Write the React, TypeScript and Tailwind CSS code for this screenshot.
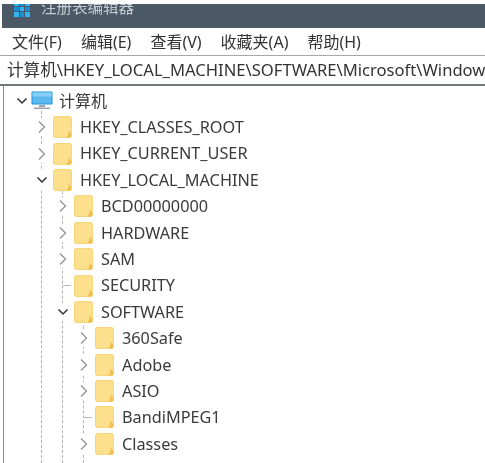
import React from "react";

const font = { fontFamily: '"Noto Sans", "Noto Sans CJK SC", sans-serif' };

function Chevron({ open }: { open?: boolean }) {
  return open ? (
    <svg width="12" height="10" viewBox="0 0 12 10" fill="none" stroke="#2f3336" strokeWidth="1.5">
      <path d="M1.5 2.5 6 7l4.5-4.5" />
    </svg>
  ) : (
    <svg width="8" height="14" viewBox="0 0 8 14" fill="none" stroke="#8f9499" strokeWidth="1.3">
      <path d="M1 1.5 6.5 7 1 12.5" />
    </svg>
  );
}

function Folder() {
  return (
    <svg width="19" height="22" viewBox="0 0 19 22" className="shrink-0">
      <rect x="0.6" y="0.6" width="17.8" height="20.8" rx="1.6" fill="#fce08e" stroke="#f8d272" strokeWidth="1" />
      <path d="M15.6 14.5l2.8 3.4v2c0 .9-.7 1.5-1.5 1.5h-3.4c1.6-1.6 2.1-4 2.1-6.9z" fill="#efc050" />
    </svg>
  );
}

function Computer() {
  return (
    <svg width="22" height="20" viewBox="0 0 22 20" className="shrink-0">
      <rect x="0.5" y="0.5" width="21" height="13" rx="1" fill="#1f8fe0" />
      <rect x="1.5" y="1.5" width="19" height="11" fill="#5cb9ef" />
      <rect x="1.5" y="1.5" width="19" height="4" fill="#86d0f5" />
      <rect x="8" y="14" width="6" height="2" fill="#9aa3ab" />
      <rect x="3" y="16.5" width="16" height="1.5" fill="#9aa3ab" />
    </svg>
  );
}

type Row = { label: string; depth: number; state: "open" | "closed" | "leaf" };

const rows: Row[] = [
  { label: "HKEY_CLASSES_ROOT", depth: 1, state: "closed" },
  { label: "HKEY_CURRENT_USER", depth: 1, state: "closed" },
  { label: "HKEY_LOCAL_MACHINE", depth: 1, state: "open" },
  { label: "BCD00000000", depth: 2, state: "closed" },
  { label: "HARDWARE", depth: 2, state: "closed" },
  { label: "SAM", depth: 2, state: "closed" },
  { label: "SECURITY", depth: 2, state: "leaf" },
  { label: "SOFTWARE", depth: 2, state: "open" },
  { label: "360Safe", depth: 3, state: "closed" },
  { label: "Adobe", depth: 3, state: "closed" },
  { label: "ASIO", depth: 3, state: "closed" },
  { label: "BandiMPEG1", depth: 3, state: "leaf" },
  { label: "Classes", depth: 3, state: "closed" },
];

const indent: Record<number, string> = {
  1: "pl-[30px]",
  2: "pl-[51px]",
  3: "pl-[72px]",
};

function TreeRow({ row }: { row: Row }) {
  return (
    <div className={`relative flex items-center h-[26.4px] shrink-0 ${indent[row.depth]}`}>
      <div className="w-[16px] h-[18px] flex items-center justify-center shrink-0">
        {row.state === "leaf" ? (
          <div className="w-[8px] h-px bg-[#b5b8bb] ml-[8px]" />
        ) : (
          <div className="bg-white h-[18px] w-[16px] flex items-center justify-center">
            <Chevron open={row.state === "open"} />
          </div>
        )}
      </div>
      <div className="ml-[3px]">
        <Folder />
      </div>
      <span className="ml-[8px] text-[16.25px] leading-none whitespace-nowrap text-[#3a3a3a]">{row.label}</span>
    </div>
  );
}

export default function App() {
  return (
    <div className="w-[485px] h-[463px] overflow-hidden bg-white" style={font}>
      <div className="w-full h-full flex flex-col blur-[0.4px]">
        <div className="h-[4px] bg-white shrink-0" />
        <div className="h-[24px] ml-[2px] bg-[#4b5866] shrink-0 flex items-start pl-[12px] gap-[11px] overflow-hidden">
          <div className="grid grid-cols-3 gap-px w-[16px] h-[16px] shrink-0 -mt-[3px]">
            {[0, 1, 2, 3, 4, 5, 6, 7, 8].map((i) => (
              <div key={i} className={i % 2 ? "bg-[#1b8fd6]" : "bg-[#32b5f0]"} />
            ))}
          </div>
          <span className="text-[15.5px] leading-none text-[#c3cad0] blur-[0.7px] -mt-[4px]">注册表编辑器</span>
        </div>
        <div className="h-[27px] shrink-0 flex items-center pl-[12px] gap-[19px] text-[16px] text-[#333]">
          <span>文件(F)</span>
          <span>编辑(E)</span>
          <span>查看(V)</span>
          <span>收藏夹(A)</span>
          <span>帮助(H)</span>
        </div>
        <div className="h-[31px] shrink-0 border-t border-b-2 border-t-[#a5a7a9] border-b-[#75787b] flex items-center pl-[7px] overflow-hidden">
          <span className="text-[16.6px] whitespace-nowrap text-[#333]">计算机\HKEY_LOCAL_MACHINE\SOFTWARE\Microsoft\Windows</span>
        </div>
        <div className="relative flex-1 border-l border-[#8d8f91] ml-[3px] flex flex-col pt-[2px]">
          <div className="absolute left-[37px] top-[25px] bottom-0 border-l border-dashed border-[#b0b4b8]" />
          <div className="absolute left-[58px] top-[105px] bottom-0 border-l border-dashed border-[#b0b4b8]" />
          <div className="absolute left-[79px] top-[240px] bottom-0 border-l border-dashed border-[#b0b4b8]" />
          <div className="relative flex items-center h-[26.4px] shrink-0 pl-[12px] -mb-[0.4px]">
            <div className="w-[12px] flex justify-center shrink-0">
              <Chevron open />
            </div>
            <div className="ml-[3px]">
              <Computer />
            </div>
            <span className="ml-[6px] text-[16px] leading-none text-[#3a3a3a]">计算机</span>
          </div>
          {rows.map((r) => (
            <TreeRow key={r.label} row={r} />
          ))}
        </div>
      </div>
    </div>
  );
}
